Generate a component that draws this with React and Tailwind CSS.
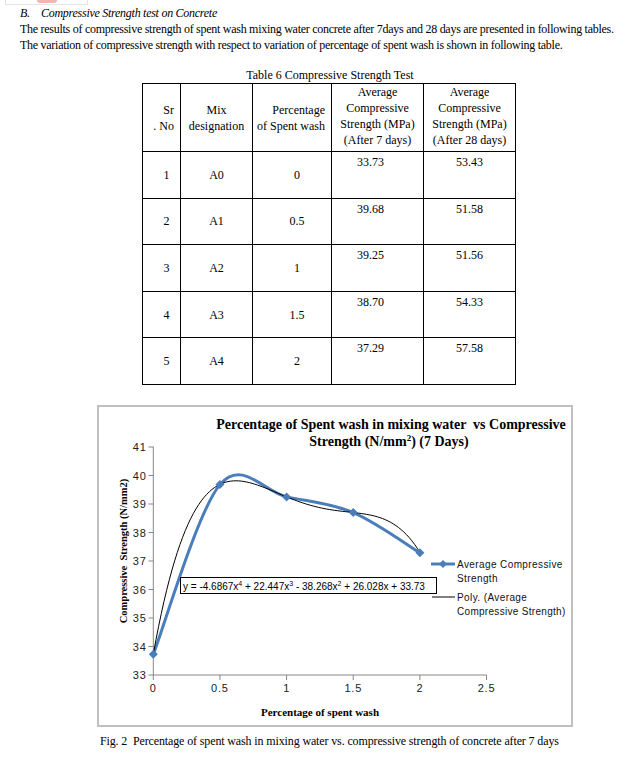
import React from 'react';

const rows = [
  ['1', 'A0', '0', '33.73', '53.43'],
  ['2', 'A1', '0.5', '39.68', '51.58'],
  ['3', 'A2', '1', '39.25', '51.56'],
  ['4', 'A3', '1.5', '38.70', '54.33'],
  ['5', 'A4', '2', '37.29', '57.58'],
];

const data = [
  [0, 33.73],
  [0.5, 39.68],
  [1, 39.25],
  [1.5, 38.7],
  [2, 37.29],
];

// chart scale (page coordinates, svg uses a matching viewBox)
const px = (x) => 153.3 + 133.3 * x;
const py = (y) => 675 - 28.5 * (y - 33);

const smoothPath = () => {
  const p = data.map(([x, y]) => [px(x), py(y)]);
  let d = `M${p[0][0]},${p[0][1]}`;
  for (let i = 0; i < p.length - 1; i++) {
    const p0 = p[i - 1] || p[i];
    const p1 = p[i];
    const p2 = p[i + 1];
    const p3 = p[i + 2] || p2;
    const c1 = [p1[0] + (p2[0] - p0[0]) / 6, p1[1] + (p2[1] - p0[1]) / 6];
    const c2 = [p2[0] - (p3[0] - p1[0]) / 6, p2[1] - (p3[1] - p1[1]) / 6];
    d += ` C${c1[0]},${c1[1]} ${c2[0]},${c2[1]} ${p2[0]},${p2[1]}`;
  }
  return d;
};

const polyPath = () => {
  const f = (x) => -4.6867 * x ** 4 + 22.447 * x ** 3 - 38.268 * x ** 2 + 26.028 * x + 33.73;
  const pts = [];
  for (let i = 0; i <= 100; i++) {
    const x = (i / 100) * 2;
    pts.push(`${px(x).toFixed(2)},${py(f(x)).toFixed(2)}`);
  }
  return 'M' + pts.join(' L');
};

const Diamond = ({ cx, cy, r = 4 }) => (
  <polygon points={`${cx},${cy - r} ${cx + r},${cy} ${cx},${cy + r} ${cx - r},${cy}`} fill="#4a7ebb" />
);

const sans = "font-['Liberation_Sans',Arial,sans-serif]";
const bold = "font-['Liberation_Serif','Times_New_Roman',serif] font-bold";

const Chart = () => (
  <div className="ml-[97px] w-[476px] h-[322px] border-2 border-[#c0c0c0] bg-white tracking-normal">
    <svg width="472" height="318" viewBox="99 407 472 318">
      <text x="391" y="429" textAnchor="middle" fontSize="14" xmlSpace="preserve" className={`${bold} whitespace-pre`}>
        {'Percentage of Spent wash in mixing water  vs Compressive'}
      </text>
      <text x="389" y="446" textAnchor="middle" fontSize="14" className={bold}>
        Strength (N/mm<tspan fontSize="9" dy="-5">2</tspan>
        <tspan dy="5">) (7 Days)</tspan>
      </text>

      {/* axes */}
      <line x1="153.3" y1="446.7" x2="153.3" y2="675" stroke="#868686" strokeWidth="1" />
      <line x1="153.3" y1="675" x2="486.7" y2="675" stroke="#868686" strokeWidth="1" />
      {[33, 34, 35, 36, 37, 38, 39, 40, 41].map((v) => (
        <g key={v}>
          <line x1="148.5" y1={py(v)} x2="153.3" y2={py(v)} stroke="#868686" />
          <text x="147" y={py(v) + 4} textAnchor="end" fontSize="11" letterSpacing="1" fill="#222" className={sans}>
            {v}
          </text>
        </g>
      ))}
      {[0, 0.5, 1, 1.5, 2, 2.5].map((v) => (
        <g key={v}>
          <line x1={px(v)} y1="675" x2={px(v)} y2="680" stroke="#868686" />
          <text x={px(v)} y="692" textAnchor="middle" fontSize="11" letterSpacing="0.8" fill="#222" className={sans}>
            {v}
          </text>
        </g>
      ))}

      <text
        x="123"
        y="555"
        textAnchor="middle"
        fontSize="10.5"
        xmlSpace="preserve"
        transform="rotate(-90 123 551)"
        className={`${bold} whitespace-pre`}
      >
        {'Compressive  Strength (N/mm2)'}
      </text>
      <text x="320" y="716" textAnchor="middle" fontSize="11" className={bold}>
        Percentage of spent wash
      </text>

      {/* series */}
      <path d={smoothPath()} fill="none" stroke="#4a7ebb" strokeWidth="3" />
      <path d={polyPath()} fill="none" stroke="#000" strokeWidth="1" />
      {data.map(([x, y]) => (
        <Diamond key={x} cx={px(x)} cy={py(y)} r={4.5} />
      ))}

      {/* equation label */}
      <rect x="180.5" y="577.5" width="256" height="16" fill="#fff" stroke="#000" strokeWidth="1" />
      <text x="183" y="589.5" fontSize="10" fill="#000" className={sans}>
        y = -4.6867x<tspan fontSize="7" dy="-4">4</tspan>
        <tspan dy="4"> + 22.447x</tspan>
        <tspan fontSize="7" dy="-4">3</tspan>
        <tspan dy="4"> - 38.268x</tspan>
        <tspan fontSize="7" dy="-4">2</tspan>
        <tspan dy="4"> + 26.028x + 33.73</tspan>
      </text>

      {/* legend */}
      <line x1="431" y1="564" x2="455" y2="564" stroke="#4a7ebb" strokeWidth="3" />
      <Diamond cx={443} cy={564} />
      <text x="457" y="568" fontSize="10" letterSpacing="0.4" fill="#111" className={sans}>
        Average Compressive
      </text>
      <text x="457" y="582" fontSize="10" letterSpacing="0.4" fill="#111" className={sans}>
        Strength
      </text>
      <line x1="432" y1="597" x2="455" y2="597" stroke="#808080" strokeWidth="2" />
      <text x="457" y="601" fontSize="10" letterSpacing="0.4" fill="#111" className={sans}>
        Poly. (Average
      </text>
      <text x="457" y="615" fontSize="10" letterSpacing="0.3" fill="#111" className={sans}>
        Compressive Strength)
      </text>
    </svg>
  </div>
);

const cell = "border border-black font-['Liberation_Serif',serif] text-[12px] leading-[16px] font-normal";

export default function App() {
  return (
    <div className="w-[642px] min-h-[761px] bg-white text-black text-[12px] leading-[16px] font-['Liberation_Serif','Times_New_Roman',serif]">
      {/* cropped image edge at the very top */}
      <div className="ml-[5px] w-[83px] h-[5px] border-x border-b border-[#e4e4e4] flex justify-center">
        <div className="w-[20px] h-[3px] rounded-b-full bg-[#f4b4b4]" />
      </div>

      <div className="pl-[20px] whitespace-nowrap tracking-[-0.27px]">
        <p className="italic">
          <span className="inline-block w-[21px]">B.</span>Compressive Strength test on Concrete
        </p>
        <p>The results of compressive strength of spent wash mixing water concrete after 7days and 28 days are presented in following tables.</p>
        <p>The variation of compressive strength with respect to variation of percentage of spent wash is shown in following table.</p>
      </div>

      <p className="mt-[14px] text-center pl-[18px]">Table 6 Compressive Strength Test</p>

      <table className="ml-[142px] border-collapse border border-black">
        <thead>
          <tr className="h-[68px]">
            <th className={`${cell} w-[38px] text-right align-middle pr-[6px]`}>
              Sr
              <br />. No
            </th>
            <th className={`${cell} w-[72px] text-center align-middle`}>
              Mix
              <br />
              designation
            </th>
            <th className={`${cell} w-[79px] text-right align-middle pr-[6px]`}>
              Percentage
              <br />
              of Spent wash
            </th>
            <th className={`${cell} w-[92px] text-center align-top`}>
              Average
              <br />
              Compressive
              <br />
              Strength (MPa)
              <br />
              (After 7 days)
            </th>
            <th className={`${cell} w-[92px] text-center align-top`}>
              Average
              <br />
              Compressive
              <br />
              Strength (MPa)
              <br />
              (After 28 days)
            </th>
          </tr>
        </thead>
        <tbody>
          {rows.map((r) => (
            <tr key={r[0]} className="h-[46.6px]">
              <td className={`${cell} text-center align-middle pl-[10px]`}>{r[0]}</td>
              <td className={`${cell} text-center align-middle`}>{r[1]}</td>
              <td className={`${cell} text-center align-middle pl-[10px]`}>{r[2]}</td>
              <td className={`${cell} text-center align-top pt-[2px] pr-[14px]`}>{r[3]}</td>
              <td className={`${cell} text-center align-top pt-[2px]`}>{r[4]}</td>
            </tr>
          ))}
        </tbody>
      </table>

      <div className="mt-[20px]">
        <Chart />
      </div>

      <p className="ml-[100px] mt-[6px] tracking-[-0.13px] whitespace-nowrap">
        Fig. 2&nbsp; Percentage of spent wash in mixing water vs. compressive strength of concrete after 7 days
      </p>
    </div>
  );
}
